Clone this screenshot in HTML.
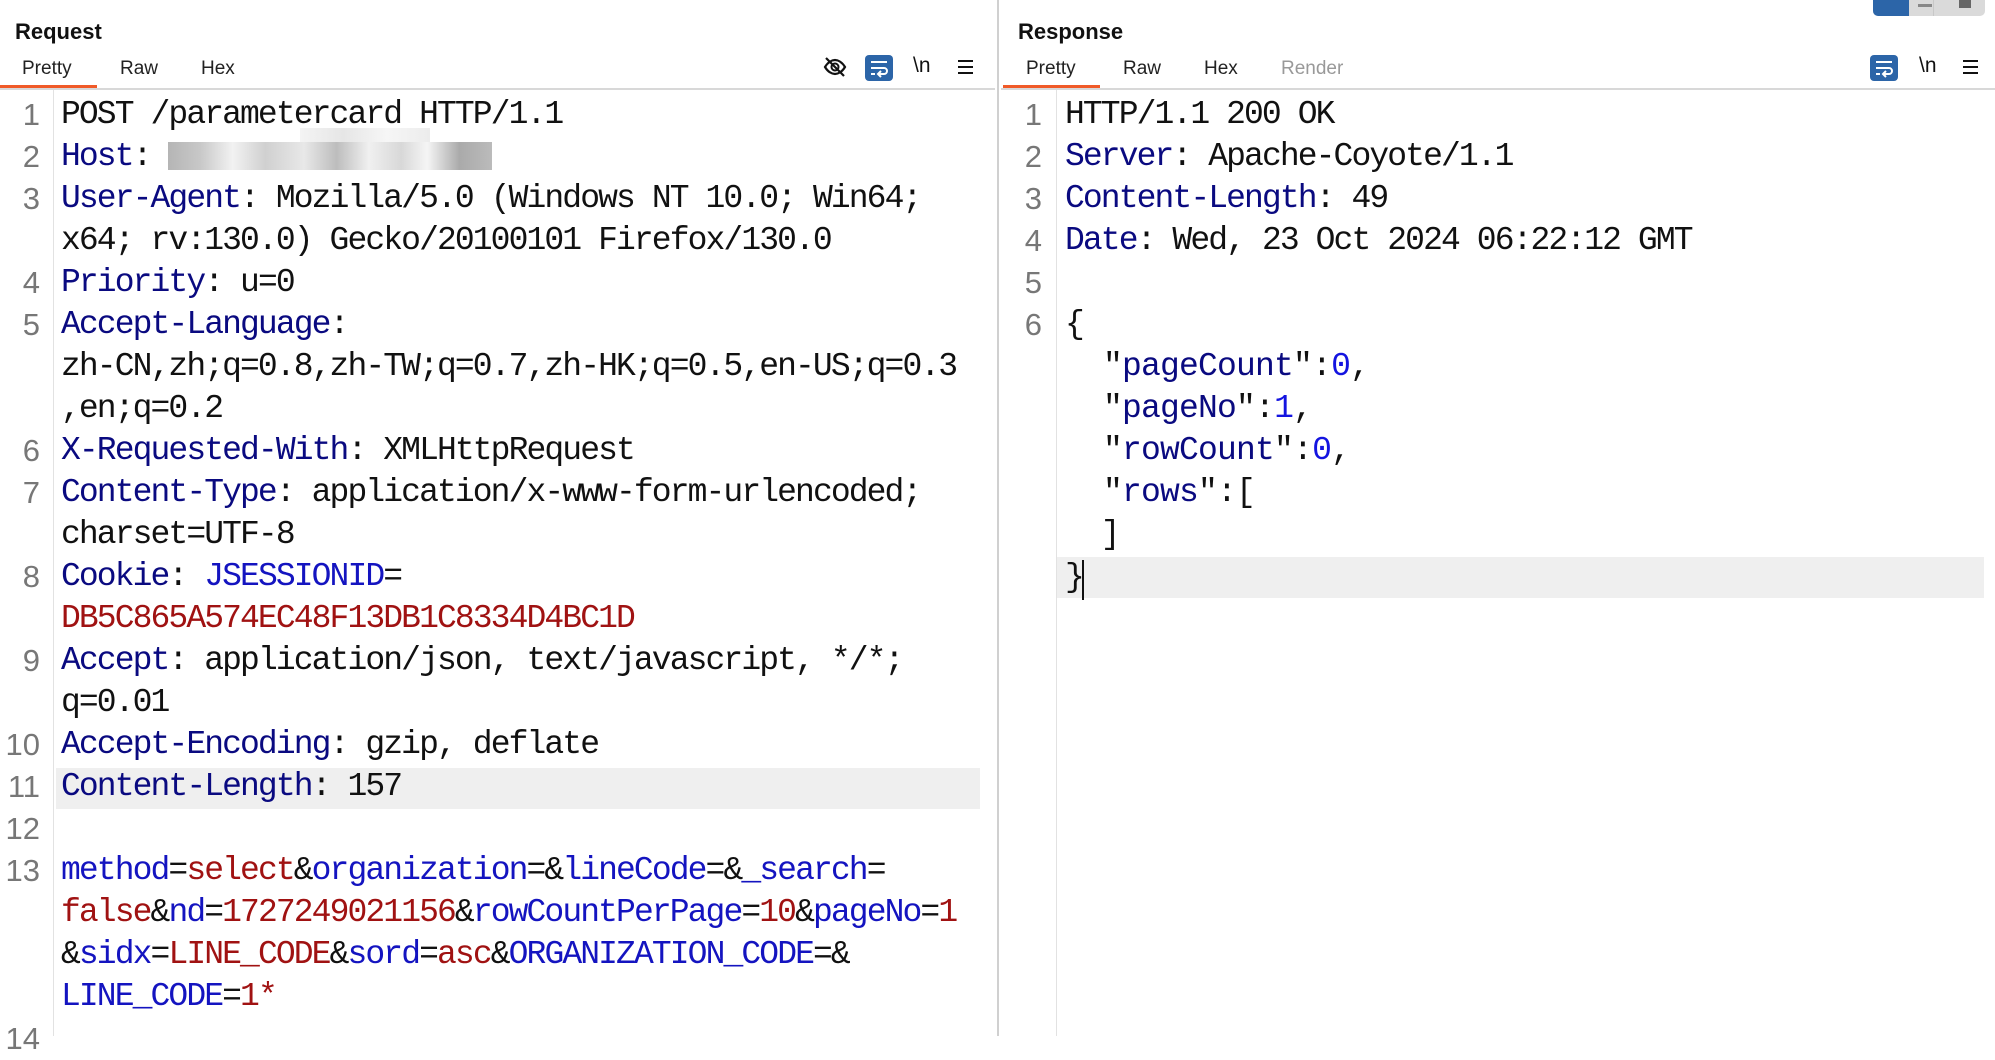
<!DOCTYPE html>
<html><head><meta charset="utf-8"><style>
*{margin:0;padding:0;box-sizing:border-box}
body{width:1995px;height:1036px;background:#fff;position:relative;overflow:hidden;font-family:"Liberation Sans",sans-serif}
.t{position:absolute;font-weight:bold;font-size:22px;color:#111}
.tab{position:absolute;top:58px;font-size:19px;color:#222}
.ul{position:absolute;top:85px;height:4px;background:#f05a28}
.sep{position:absolute;top:88px;height:2px;background:#d8d8d8}
.r{position:absolute;height:42px;line-height:42px;margin-top:2px;font-family:"Liberation Mono",monospace;font-size:33px;letter-spacing:-1.9px;white-space:pre;color:#111}
.n{position:absolute;height:42px;line-height:42px;margin-top:2px;font-size:31px;color:#777;text-align:right;width:44px}
.k{color:#0a0a80}.b{color:#1414c0}.d{color:#a01212}.j{color:#0a0a80}.v{color:#1414e0}
.hl{position:absolute;background:#efefef}
.ic{position:absolute}
</style></head><body>
<div class="t" style="left:15px;top:19px">Request</div>
<div class="t" style="left:1018px;top:19px">Response</div>
<div class="tab" style="left:22px">Pretty</div><div class="tab" style="left:120px">Raw</div><div class="tab" style="left:201px">Hex</div>
<div class="tab" style="left:1026px">Pretty</div><div class="tab" style="left:1123px">Raw</div><div class="tab" style="left:1204px">Hex</div><div class="tab" style="left:1281px;color:#999">Render</div>
<div class="ul" style="left:0;width:97px"></div><div class="ul" style="left:1003px;width:97px"></div>
<div class="sep" style="left:0;width:995px"></div><div class="sep" style="left:1001px;width:994px"></div>
<div style="position:absolute;left:997px;top:0;width:2px;height:1036px;background:#d0d0d0"></div>
<div style="position:absolute;left:53px;top:90px;width:1px;height:946px;background:#e2e2e2"></div>
<div style="position:absolute;left:1056px;top:90px;width:1px;height:946px;background:#e2e2e2"></div>
<!-- layout buttons -->
<div style="position:absolute;left:1873px;top:0;width:112px;height:16px;background:#dadada;border-radius:0 0 5px 5px"></div>
<div style="position:absolute;left:1873px;top:0;width:36px;height:16px;background:#2c65a8;border-radius:0 0 0 5px"></div>
<div style="position:absolute;left:1933px;top:0;width:1px;height:16px;background:#c8c8c8"></div>
<div style="position:absolute;left:1918px;top:4px;width:14px;height:3px;background:#888"></div>
<div style="position:absolute;left:1959px;top:0;width:12px;height:8px;background:#666"></div>
<!-- icons left -->
<svg class="ic" style="left:823px;top:56px" width="24" height="22" viewBox="0 0 24 22"><path d="M2 11c3-5 7-7 10-7s7 2 10 7c-3 5-7 7-10 7s-7-2-10-7z" fill="none" stroke="#111" stroke-width="2.2"/><circle cx="12" cy="11" r="3.5" fill="none" stroke="#111" stroke-width="2"/><line x1="3" y1="2" x2="21" y2="20" stroke="#111" stroke-width="2.2"/></svg>
<svg class="ic" style="left:865px;top:55px" width="28" height="26" viewBox="0 0 28 26"><rect width="28" height="26" rx="4" fill="#2c65a8"/><path d="M6 7h16M6 13h13a3 3 0 0 1 0 6h-5M16 16l-3 3 3 3M6 19h4" stroke="#fff" stroke-width="2" fill="none"/></svg>
<div class="ic" style="left:913px;top:54px;font-size:21px;color:#111">\n</div>
<div class="ic" style="left:958px;top:60px;width:15px;height:14px;border-top:2px solid #111;border-bottom:2px solid #111"><div style="margin-top:4px;height:2px;background:#111"></div></div>
<!-- icons right -->
<svg class="ic" style="left:1870px;top:55px" width="28" height="26" viewBox="0 0 28 26"><rect width="28" height="26" rx="4" fill="#2c65a8"/><path d="M6 7h16M6 13h13a3 3 0 0 1 0 6h-5M16 16l-3 3 3 3M6 19h4" stroke="#fff" stroke-width="2" fill="none"/></svg>
<div class="ic" style="left:1919px;top:54px;font-size:21px;color:#111">\n</div>
<div class="ic" style="left:1963px;top:60px;width:15px;height:14px;border-top:2px solid #111;border-bottom:2px solid #111"><div style="margin-top:4px;height:2px;background:#111"></div></div>
<!-- highlights -->
<div class="hl" style="left:56px;top:768px;width:924px;height:41px"></div>
<div class="hl" style="left:1057px;top:557px;width:927px;height:41px"></div>
<!-- left numbers -->
<div class="n" style="left:-4px;top:92px">1</div>
<div class="n" style="left:-4px;top:134px">2</div>
<div class="n" style="left:-4px;top:176px">3</div>
<div class="n" style="left:-4px;top:260px">4</div>
<div class="n" style="left:-4px;top:302px">5</div>
<div class="n" style="left:-4px;top:428px">6</div>
<div class="n" style="left:-4px;top:470px">7</div>
<div class="n" style="left:-4px;top:554px">8</div>
<div class="n" style="left:-4px;top:638px">9</div>
<div class="n" style="left:-4px;top:722px">10</div>
<div class="n" style="left:-4px;top:764px">11</div>
<div class="n" style="left:-4px;top:806px">12</div>
<div class="n" style="left:-4px;top:848px">13</div>
<div class="n" style="left:-4px;top:1016px">14</div>
<!-- left text -->
<div class="r" style="left:61px;top:92px">POST /parametercard HTTP/1.1</div>
<div class="r" style="left:61px;top:134px"><span class="k">Host</span>:</div>
<div style="position:absolute;left:168px;top:142px;width:324px;height:28px;background:linear-gradient(90deg,#b5b5b5 0,#c8c8c8 10%,#f2f2f2 20%,#d0d0d0 30%,#e8e8e8 42%,#bdbdbd 52%,#f0f0f0 62%,#d8d8d8 72%,#f5f5f5 80%,#aaa 90%,#bbb 100%)"></div>
<div style="position:absolute;left:300px;top:128px;width:130px;height:14px;background:linear-gradient(90deg,#f4f4f4,#e6e6e6,#f6f6f6,#ececec)"></div>
<div class="r" style="left:61px;top:176px"><span class="k">User-Agent</span>: Mozilla/5.0 (Windows NT 10.0; Win64;</div>
<div class="r" style="left:61px;top:218px">x64; rv:130.0) Gecko/20100101 Firefox/130.0</div>
<div class="r" style="left:61px;top:260px"><span class="k">Priority</span>: u=0</div>
<div class="r" style="left:61px;top:302px"><span class="k">Accept-Language</span>:</div>
<div class="r" style="left:61px;top:344px">zh-CN,zh;q=0.8,zh-TW;q=0.7,zh-HK;q=0.5,en-US;q=0.3</div>
<div class="r" style="left:61px;top:386px">,en;q=0.2</div>
<div class="r" style="left:61px;top:428px"><span class="k">X-Requested-With</span>: XMLHttpRequest</div>
<div class="r" style="left:61px;top:470px"><span class="k">Content-Type</span>: application/x-www-form-urlencoded;</div>
<div class="r" style="left:61px;top:512px">charset=UTF-8</div>
<div class="r" style="left:61px;top:554px"><span class="k">Cookie</span>: <span class="b">JSESSIONID</span>=</div>
<div class="r d" style="left:61px;top:596px">DB5C865A574EC48F13DB1C8334D4BC1D</div>
<div class="r" style="left:61px;top:638px"><span class="k">Accept</span>: application/json, text/javascript, */*;</div>
<div class="r" style="left:61px;top:680px">q=0.01</div>
<div class="r" style="left:61px;top:722px"><span class="k">Accept-Encoding</span>: gzip, deflate</div>
<div class="r" style="left:61px;top:764px"><span class="k">Content-Length</span>: 157</div>
<div class="r" style="left:61px;top:848px"><span class="b">method</span>=<span class="d">select</span>&amp;<span class="b">organization</span>=&amp;<span class="b">lineCode</span>=&amp;<span class="b">_search</span>=</div>
<div class="r" style="left:61px;top:890px"><span class="d">false</span>&amp;<span class="b">nd</span>=<span class="d">1727249021156</span>&amp;<span class="b">rowCountPerPage</span>=<span class="d">10</span>&amp;<span class="b">pageNo</span>=<span class="d">1</span></div>
<div class="r" style="left:61px;top:932px">&amp;<span class="b">sidx</span>=<span class="d">LINE_CODE</span>&amp;<span class="b">sord</span>=<span class="d">asc</span>&amp;<span class="b">ORGANIZATION_CODE</span>=&amp;</div>
<div class="r" style="left:61px;top:974px"><span class="b">LINE_CODE</span>=<span class="d">1*</span></div>
<!-- right numbers -->
<div class="n" style="left:998px;top:92px">1</div>
<div class="n" style="left:998px;top:134px">2</div>
<div class="n" style="left:998px;top:176px">3</div>
<div class="n" style="left:998px;top:218px">4</div>
<div class="n" style="left:998px;top:260px">5</div>
<div class="n" style="left:998px;top:302px">6</div>
<!-- right text -->
<div class="r" style="left:1065px;top:92px">HTTP/1.1 200 OK</div>
<div class="r" style="left:1065px;top:134px"><span class="k">Server</span>: Apache-Coyote/1.1</div>
<div class="r" style="left:1065px;top:176px"><span class="k">Content-Length</span>: 49</div>
<div class="r" style="left:1065px;top:218px"><span class="k">Date</span>: Wed, 23 Oct 2024 06:22:12 GMT</div>
<div class="r" style="left:1065px;top:302px">{</div>
<div class="r" style="left:1065px;top:344px;letter-spacing:-0.8px">  "<span class="j">pageCount</span>":<span class="v">0</span>,</div>
<div class="r" style="left:1065px;top:386px;letter-spacing:-0.8px">  "<span class="j">pageNo</span>":<span class="v">1</span>,</div>
<div class="r" style="left:1065px;top:428px;letter-spacing:-0.8px">  "<span class="j">rowCount</span>":<span class="v">0</span>,</div>
<div class="r" style="left:1065px;top:470px;letter-spacing:-0.8px">  "<span class="j">rows</span>":[</div>
<div class="r" style="left:1065px;top:512px">  ]</div>
<div class="r" style="left:1065px;top:555px">}</div>
<div style="position:absolute;left:1082px;top:560px;width:2px;height:40px;background:#111"></div>
</body></html>
